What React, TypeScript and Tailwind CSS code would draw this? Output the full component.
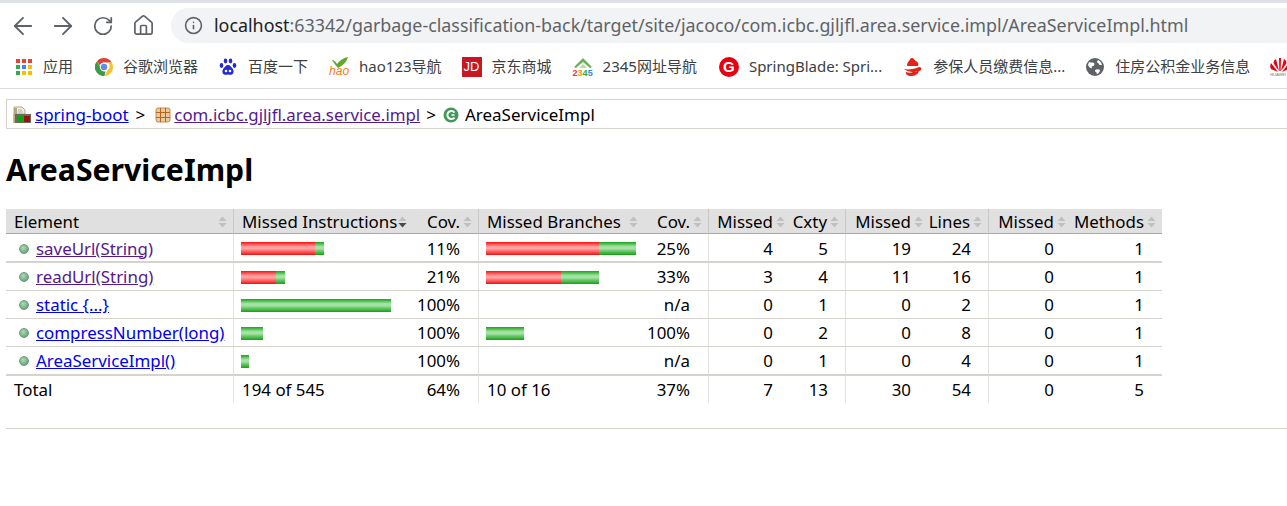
import { ArrowLeft, ArrowRight, House, Info, RotateCw } from "lucide-react";

const uiFont = "font-['Noto_Sans','Noto_Sans_CJK_SC',sans-serif]";

function AppsIcon() {
  const colors = ["#ea4335", "#ea4335", "#ea4335", "#34a853", "#4285f4", "#fbbc05", "#34a853", "#fbbc05", "#fbbc05"];
  return (
    <span className="grid w-4 h-4 grid-cols-3 gap-[2px]">
      {colors.map((c, i) => (
        <svg key={i} viewBox="0 0 4 4" className="w-full h-full">
          <rect width="4" height="4" fill={c} />
        </svg>
      ))}
    </span>
  );
}

function ChromeIcon() {
  return (
    <svg viewBox="0 0 18 18" className="w-[18px] h-[18px]">
      <path d="M9 0a9 9 0 0 1 7.8 4.5H9a4.5 4.5 0 0 0-4.2 3L2 3.2A9 9 0 0 1 9 0z" fill="#db4437" />
      <path d="M16.8 4.5A9 9 0 0 1 9.4 18l3.5-6.4a4.5 4.5 0 0 0 0-7.1z" fill="#fbc02d" />
      <path d="M9.4 18A9 9 0 0 1 2 3.2l3 5.2a4.5 4.5 0 0 0 5.6 4.9z" fill="#3d9b46" />
      <circle cx="9" cy="9" r="4.2" fill="#fff" />
      <circle cx="9" cy="9" r="3.2" fill="#5a8fee" />
    </svg>
  );
}

function BaiduIcon() {
  return (
    <svg viewBox="0 0 18 18" className="w-[18px] h-[18px]" fill="#2529d8">
      <ellipse cx="6.5" cy="3" rx="1.8" ry="2.4" />
      <ellipse cx="11.5" cy="3" rx="1.8" ry="2.4" />
      <ellipse cx="2.5" cy="7.5" rx="1.8" ry="2.4" />
      <ellipse cx="15.5" cy="7.5" rx="1.8" ry="2.4" />
      <path d="M9 7c2.2 0 3 2 4.5 3.4 1.8 1.7 1.4 6-1.6 6.4-1.2.2-2-.3-2.9-.3s-1.7.5-2.9.3c-3-.4-3.4-4.7-1.6-6.4C6 9 6.8 7 9 7z" />
      <circle cx="7" cy="13" r="1.3" fill="#fff" />
      <circle cx="11" cy="13" r="1.3" fill="#fff" />
    </svg>
  );
}

function HaoIcon() {
  return (
    <span className="relative block w-5 h-[20px]">
      <svg viewBox="0 0 20 12" className="absolute top-0 left-0 w-5 h-3">
        <path d="M3 3c2 0 4 2 5 4C10 4 14 1 19 0c-1 5-6 9-10 11C7 9 5 6 3 3z" fill="#62a82d" />
      </svg>
      <span className="absolute left-0 top-[9px] text-[12px] leading-[11px] italic text-[#f07818] font-['Liberation_Sans',sans-serif]">
        hao
      </span>
    </span>
  );
}

function JdIcon() {
  return (
    <span className="flex items-center justify-center w-5 h-5 bg-[#c81623] text-white text-[13px] font-['Liberation_Sans',sans-serif]">
      JD
    </span>
  );
}

function Icon2345() {
  return (
    <span className="relative block w-5 h-5">
      <svg viewBox="0 0 20 12" className="absolute top-0 left-0 w-5 h-3">
        <path d="M1 10 10 1l9 9-2 1-7-6-7 6z" fill="#6fae5a" />
        <path d="M6 11 10 7l4 4z" fill="#b9d8a8" />
      </svg>
      <span className="absolute left-0 top-[12px] flex w-5 justify-between text-[9px] leading-[8px] font-bold font-['Liberation_Sans',sans-serif]">
        <span className="text-[#e33]">2</span>
        <span className="text-[#e90]">3</span>
        <span className="text-[#3a3]">4</span>
        <span className="text-[#38d]">5</span>
      </span>
    </span>
  );
}

function GIcon() {
  return (
    <span className="flex items-center justify-center w-5 h-5 rounded-full bg-[#e60012] text-white text-[15px] leading-none font-bold font-['Liberation_Sans',sans-serif]">
      G
    </span>
  );
}

function RedSwirlIcon() {
  return (
    <svg viewBox="0 0 20 20" className="w-5 h-5">
      <path d="M9 1c2 0 2 2 4 3s3 3 2 5H4c0-3 1-4 2-5s1-3 3-3z" fill="#e2231a" />
      <path d="M1 12c4 1 11 0 15-2 2 0 3 1 2 3-1 1-4 2-7 2 2 0 4 0 5-1-1 4-5 5-8 5s-6-2-5-4c2 1 5 1 7 0-3 0-7-1-9-3z" fill="#e2231a" />
    </svg>
  );
}

function GlobeIcon() {
  return (
    <svg viewBox="0 0 18 18" className="w-[18px] h-[18px]">
      <circle cx="9" cy="9" r="9" fill="#5f6368" />
      <path d="M3 4c2 1 3 0 5 1 1 1 0 3-1 3s-2 1-1 2c-1 1-3-1-4-3zM12 2c2 1 3 2 4 5-2 0-3 0-3-1s-2-1-2-2 1-1 1-2zM9 12c2-1 4-1 5 0 0 2-2 4-3 4-1-1 0-2-1-2s-1-1-1-2z" fill="#fff" />
    </svg>
  );
}

function HuaweiIcon() {
  return (
    <span className="relative block w-5 h-5 shrink-0">
      <svg viewBox="0 0 20 16" className="absolute top-0 left-0 w-5 h-4" fill="#e60012">
        <path d="M9 14 6 2c-2 1-3 3-2 5zM11 14l3-12c2 1 3 3 2 5zM9.4 14 9 1h2l-.4 13zM8 15 1 6c-1 2-1 4 0 6zM12 15l7-9c1 2 1 4 0 6z" />
      </svg>
      <span className="absolute left-0 top-[15px] text-[4px] leading-[5px] text-[#777] font-['Liberation_Sans',sans-serif]">HUAWEI</span>
    </span>
  );
}

const bookmarks = [
  { icon: <AppsIcon />, label: "应用", cls: "gap-[11px] mr-[1px]" },
  { icon: <ChromeIcon />, label: "谷歌浏览器", cls: "gap-[10px]" },
  { icon: <BaiduIcon />, label: "百度一下", cls: "gap-[11px]" },
  { icon: <HaoIcon />, label: "hao123导航", cls: "gap-[10px] -mr-[1px]" },
  { icon: <JdIcon />, label: "京东商城", cls: "gap-[10px]" },
  { icon: <Icon2345 />, label: "2345网址导航", cls: "gap-[10px] mr-[1px]" },
  { icon: <GIcon />, label: "SpringBlade: Spri...", cls: "gap-[10px]" },
  { icon: <RedSwirlIcon />, label: "参保人员缴费信息...", cls: "gap-[10px]" },
  { icon: <GlobeIcon />, label: "住房公积金业务信息", cls: "gap-[11px] -mr-[1px]" },
];

function ReportIcon() {
  return (
    <svg viewBox="0 0 18 18" className="w-[18px] h-[18px]">
      <path d="M1 1h8l3 3v4H1v9h0z" fill="#f2efe0" stroke="#b5a77a" />
      <rect x="1" y="2" width="3" height="15" fill="#b5a77a" />
      <path d="M5 4h4M5 6h5" stroke="#9db4d0" />
      <rect x="2" y="8" width="16" height="9" fill="#6b6b5a" />
      <rect x="4" y="10" width="6" height="6" fill="#10a010" />
      <rect x="11" y="10" width="6" height="6" fill="#9c1010" />
    </svg>
  );
}

function PackageIcon() {
  return (
    <svg viewBox="0 0 16 16" className="w-4 h-4">
      <rect x="1" y="1" width="14" height="14" rx="2" fill="#e8c9a0" stroke="#c98a4a" />
      <path d="M5.5 1v14M10.5 1v14M1 5.5h14M1 10.5h14" stroke="#b5651d" />
    </svg>
  );
}

function ClassIcon() {
  return (
    <svg viewBox="0 0 16 16" className="w-4 h-4">
      <circle cx="8" cy="8" r="7.5" fill="#3f9a58" />
      <path d="M11.5 5.5A4 4 0 1 0 11.5 10.5" fill="none" stroke="#fff" strokeWidth="2" />
      <path d="M8.5 8h3" stroke="#fff" strokeWidth="1.6" />
    </svg>
  );
}

function SortIcon({ active = false }: { active?: boolean }) {
  return (
    <svg viewBox="0 0 10 13" className="w-[9px] h-[12px] shrink-0">
      <path d="M5 0.5 9.5 5.5H0.5z" fill="#c0c0c0" />
      <path d="M5 12.5 9.5 7.5H0.5z" fill={active ? "#4a4a4a" : "#c0c0c0"} />
    </svg>
  );
}

function Bar({ red = 0, green = 0 }: { red?: number; green?: number }) {
  return (
    <div className="flex h-[13px]">
      {red > 0 && (
        <div
          className="bg-[linear-gradient(#fb1010_0%,#ff9a9a_35%,#ffa5a5_50%,#ff5a5a_75%,#f01010_100%)]"
          style={{ width: red }}
        />
      )}
      {green > 0 && (
        <div
          className="bg-[linear-gradient(#14a514_0%,#a2e0a2_35%,#a8e2a8_50%,#5cc05c_75%,#0fa50f_100%)]"
          style={{ width: green }}
        />
      )}
    </div>
  );
}

const rows = [
  { name: "saveUrl(String)", visited: true, bar: [74, 9], cov: "11%", bbar: [113, 37], bcov: "25%", v: ["4", "5", "19", "24", "0", "1"] },
  { name: "readUrl(String)", visited: true, bar: [35, 9], cov: "21%", bbar: [75, 38], bcov: "33%", v: ["3", "4", "11", "16", "0", "1"] },
  { name: "static {...}", visited: false, bar: [0, 150], cov: "100%", bbar: [0, 0], bcov: "n/a", v: ["0", "1", "0", "2", "0", "1"] },
  { name: "compressNumber(long)", visited: false, bar: [0, 22], cov: "100%", bbar: [0, 38], bcov: "100%", v: ["0", "2", "0", "8", "0", "1"] },
  { name: "AreaServiceImpl()", visited: false, bar: [0, 8], cov: "100%", bbar: [0, 0], bcov: "n/a", v: ["0", "1", "0", "4", "0", "1"] },
];

const numHead = "Missed,Cxty,Missed,Lines,Missed,Methods".split(",");
// columns that close a group carry the vertical rule
const groupEnd = [false, true, false, true, false, false];

const thBase = "h-[25px] p-0 pt-[1px] leading-[23px] bg-[#e0e0e0] font-normal border-b border-[#a8a8a8]";
const tdRule = "border-r border-[#e4e2df]";

function HeadNum({ label, active = false, rule = false }: { label: string; active?: boolean; rule?: boolean }) {
  return (
    <th className={`${thBase} ${rule ? "border-r border-r-[#c8c8c8]" : ""}`}>
      <div className="flex items-center justify-end gap-[3px] pr-[6px]">
        {label}
        <SortIcon active={active} />
      </div>
    </th>
  );
}

export default function App() {
  return (
    <div className={`w-[1287px] h-[506px] overflow-hidden bg-white ${uiFont}`}>
      {/* Browser chrome */}
      <div className="h-[3px] bg-[#dee1e6]" />
      <div className="flex items-center h-[42px] pt-[3px] text-[#5f6368]">
        <div className="flex items-center pl-[3px] w-[171px]">
          <span className="flex justify-center w-10">
            <ArrowLeft size={28} strokeWidth={1.6} />
          </span>
          <span className="flex justify-center w-10">
            <ArrowRight size={28} strokeWidth={1.6} />
          </span>
          <span className="flex justify-center w-10">
            <RotateCw size={22} strokeWidth={1.9} />
          </span>
          <span className="flex justify-center w-10">
            <House size={23} strokeWidth={1.8} />
          </span>
        </div>
        <div className="flex items-center flex-1 h-[35px] gap-[11px] pl-[13px] rounded-l-full bg-[#f1f3f4]">
          <Info size={19} strokeWidth={2} />
          <div className="text-[17.87px] whitespace-nowrap">
            <span className="text-[#202124]">localhost</span>:63342/garbage-classification-back/target/site/jacoco/com.icbc.gjljfl.area.service.impl/AreaServiceImpl.html
          </div>
        </div>
      </div>
      <div className="flex items-center h-[44px] gap-[21px] pl-[16px] border-b border-[#dadce0] text-[15px] text-[#3c4043] whitespace-nowrap">
        {bookmarks.map((b) => (
          <div key={b.label} className={`flex items-center ${b.cls}`}>
            {b.icon}
            <span>{b.label}</span>
          </div>
        ))}
        <HuaweiIcon />
      </div>

      {/* Page content */}
      <div className="flex items-center h-[30px] ml-[6px] mt-[10px] pl-[6px] pt-[2px] border border-r-0 border-[#d6d3ce] text-[17px] text-black whitespace-nowrap">
        <ReportIcon />
        <a className="ml-[4px] underline text-[#0000ee]">spring-boot</a>
        <span className="ml-[7px] mr-[10px]">&gt;</span>
        <PackageIcon />
        <a className="ml-[3px] underline text-[#551a8b] text-[16.85px]">com.icbc.gjljfl.area.service.impl</a>
        <span className="ml-[6px] mr-[7px]">&gt;</span>
        <ClassIcon />
        <span className="ml-[6px]">AreaServiceImpl</span>
      </div>

      <h1 className="ml-[6px] mt-[21px] h-[40px] text-[30.2px] leading-[40px] font-bold text-black">AreaServiceImpl</h1>

      <table className="ml-[6px] mt-[19px] w-[1156px] table-fixed border-separate border-spacing-0 text-[16.9px] leading-[24px] text-black whitespace-nowrap">
        <colgroup>
          <col className="w-[228px]" />
          <col className="w-[173px]" />
          <col className="w-[72px]" />
          <col className="w-[162px]" />
          <col className="w-[68px]" />
          <col className="w-[82px]" />
          <col className="w-[55px]" />
          <col className="w-[83px]" />
          <col className="w-[60px]" />
          <col className="w-[83px]" />
          <col className="w-[90px]" />
        </colgroup>
        <thead>
          <tr>
            <th className={`${thBase} border-r border-r-[#c8c8c8]`}>
              <div className="flex items-center justify-between pl-[8px] pr-[6px]">
                Element
                <SortIcon />
              </div>
            </th>
            <th className={thBase}>
              <div className="flex items-center justify-between pl-[8px]">
                Missed Instructions
                <SortIcon active />
              </div>
            </th>
            <HeadNum label="Cov." rule />
            <th className={thBase}>
              <div className="flex items-center justify-between pl-[8px] pr-[3px]">
                Missed Branches
                <SortIcon />
              </div>
            </th>
            <HeadNum label="Cov." rule />
            {numHead.map((h, i) => (
              <HeadNum key={i} label={h} rule={groupEnd[i]} />
            ))}
          </tr>
        </thead>
        <tbody>
          {rows.map((r, idx) => {
            // first and last rows close with the heavier rule
            const rowLine = idx === 0 || idx === rows.length - 1 ? "border-b-2 border-b-[#d6d3ce]" : "border-b border-b-[#d6d3ce]";
            const td = `p-0 ${idx === 0 ? "pt-[2px]" : "pt-[1px]"} ${idx === 0 || idx === rows.length - 1 ? "h-[29px]" : "h-[28px]"} ${rowLine}`;
            return (
              <tr key={r.name}>
                <td className={`${td} ${tdRule}`}>
                  <div className="flex items-center pl-[13px]">
                    <span className="w-[10px] h-[10px] mr-[7px] rounded-full border border-[#6a9a78] bg-[radial-gradient(circle_at_40%_35%,#b0d8b8,#4f9a64)]" />
                    <a className={`underline ${r.visited ? "text-[#551a8b]" : "text-[#0000ee]"}`}>{r.name}</a>
                  </div>
                </td>
                <td className={`${td} pl-[7px]`}>
                  <Bar red={r.bar[0]} green={r.bar[1]} />
                </td>
                <td className={`${td} ${tdRule} pr-[18px] text-right`}>{r.cov}</td>
                <td className={`${td} pl-[7px]`}>
                  <Bar red={r.bbar[0]} green={r.bbar[1]} />
                </td>
                <td className={`${td} ${tdRule} pr-[18px] text-right`}>{r.bcov}</td>
                {r.v.map((n, i) => (
                  <td key={i} className={`${td} ${groupEnd[i] ? `${tdRule} pr-[17px]` : "pr-[18px]"} text-right`}>
                    {n}
                  </td>
                ))}
              </tr>
            );
          })}
        </tbody>
        <tfoot>
          <tr className="h-[27px]">
            <td className={`p-0 pl-[8px] ${tdRule}`}>Total</td>
            <td className="p-0 pl-[8px]">194 of 545</td>
            <td className={`p-0 pr-[18px] text-right ${tdRule}`}>64%</td>
            <td className="p-0 pl-[8px]">10 of 16</td>
            <td className={`p-0 pr-[18px] text-right ${tdRule}`}>37%</td>
            {["7", "13", "30", "54", "0", "5"].map((n, i) => (
              <td key={i} className={`p-0 text-right ${groupEnd[i] ? `${tdRule} pr-[17px]` : "pr-[18px]"}`}>
                {n}
              </td>
            ))}
          </tr>
        </tfoot>
      </table>

      <hr className="ml-[6px] mt-[25px] border-t border-[#d6d3ce]" />
    </div>
  );
}
